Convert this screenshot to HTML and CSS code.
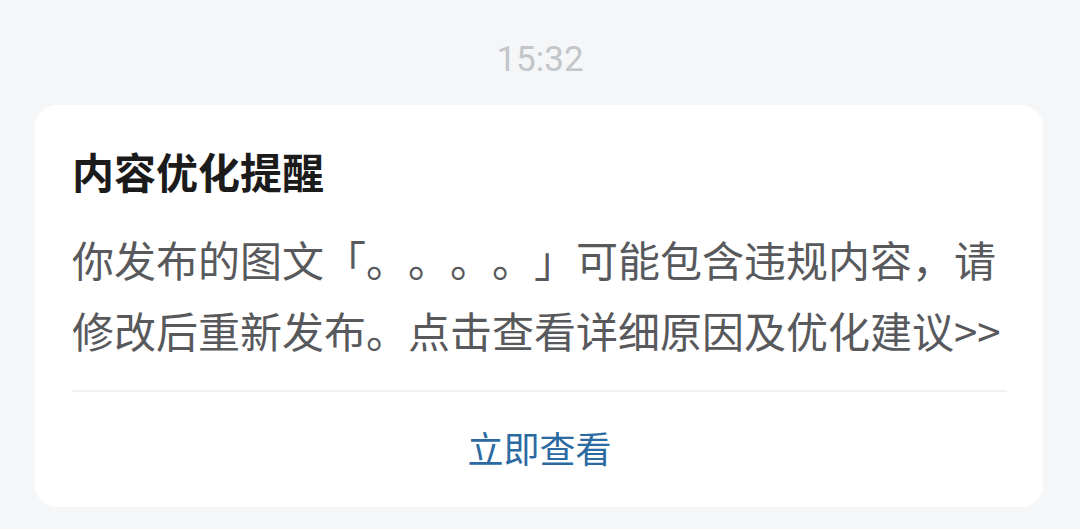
FILE: index.html
```html
<!DOCTYPE html>
<html lang="zh-CN">
<head>
<meta charset="utf-8">
<title>内容优化提醒</title>
<link rel="stylesheet" href="styles.css">
</head>
<body>
<div class="page">
  <div class="time">15:32</div>
  <div class="card">
    <div class="card-title">内容优化提醒</div>
    <p class="card-body">你发布的图文「。。。。」可能包含违规内容，请修改后重新发布。点击查看详细原因及优化建议&gt;&gt;</p>
    <div class="divider"></div>
    <div class="action">立即查看</div>
  </div>
</div>
</body>
</html>
```
FILE: styles.css
```css
html, body {
  margin: 0;
  padding: 0;
  background: #f5f6f8;
}

.page {
  width: 1080px;
  height: 529px;
  overflow: hidden;
  font-family: "Noto Sans CJK SC", "Noto Sans", sans-serif;
}

.time {
  padding-top: 40px;
  height: 40px;
  line-height: 40px;
  text-align: center;
  font-family: Roboto, "Noto Sans", sans-serif;
  font-size: 35px;
  color: #c2c5ca;
  margin-bottom: 25px;
}

.card {
  margin: 0 37px 0 35px;
  background: #ffffff;
  border-radius: 22px;
  padding: 38px 36px 5px 37px;
}

.card-title {
  font-size: 42px;
  line-height: 56px;
  font-weight: 700;
  color: #1b1b1b;
  text-spacing-trim: space-all;
}

.card-body {
  margin: 24px 0 25px 0;
  font-size: 42px;
  line-height: 71px;
  color: #58595c;
  text-spacing-trim: space-all;
}

.divider {
  height: 2px;
  background: #f1f1f2;
}

.action {
  height: 110px;
  line-height: 110px;
  text-align: center;
  font-size: 36px;
  color: #2c6aa2;
}
```
